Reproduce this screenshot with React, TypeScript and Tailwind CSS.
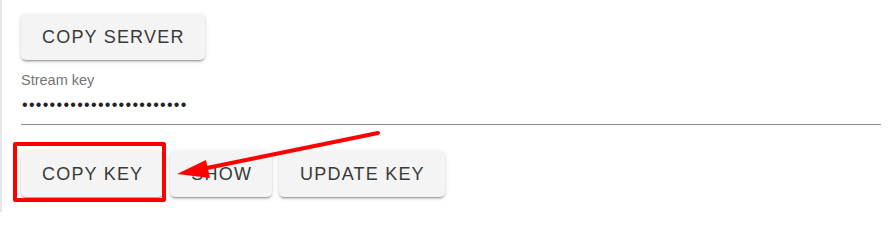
import React from "react";

function Btn({ children }: { children: React.ReactNode }) {
  return (
    <button className="h-[46px] pl-[21px] pr-[20px] rounded-[5px] bg-[#f4f4f4] text-[#3a3a3a] text-[18px] tracking-[1.2px] uppercase font-['Liberation_Sans',Arial,sans-serif] shadow-[0_3px_1px_-2px_rgba(0,0,0,0.2),0_2px_2px_0_rgba(0,0,0,0.14),0_1px_5px_0_rgba(0,0,0,0.12)]">
      {children}
    </button>
  );
}

export default function App() {
  return (
    <div className="relative w-[892px] h-[212px] bg-white border-l-2 border-[#e6e6e6] overflow-hidden font-['Liberation_Sans',Arial,sans-serif]">
      <div className="pl-[19px] pr-[11px] pt-[14px] flex flex-col">
        <div>
          <Btn>Copy Server</Btn>
        </div>
        <label className="mt-[11px] text-[14.5px] leading-[18px] text-[#757575]">Stream key</label>
        <div className="mt-[6px] pb-[9px] border-b-[1.5px] border-[#8c8c8c] text-[#222] text-[16px] leading-[20px] tracking-[1.3px] pl-[1px]">
          {"\u2022".repeat(24)}
        </div>
        <div className="mt-[26px] flex gap-[7px]">
          <Btn>Copy Key</Btn>
          <Btn>Show</Btn>
          <Btn>Update Key</Btn>
        </div>
      </div>

      {/* annotation: red box */}
      <div className="absolute left-[11px] top-[142px] w-[153px] h-[60px] border-[4px] border-[#ff0000] rounded-[2px]" />

      {/* annotation: arrow */}
      <svg className="absolute left-0 top-0" width="892" height="212" viewBox="0 0 892 212">
        <line x1="376" y1="133" x2="200" y2="169" stroke="#ff0000" strokeWidth="4" strokeLinecap="round" />
        <polygon points="175,174 204,160 208,178" fill="#ff0000" />
      </svg>
    </div>
  );
}
